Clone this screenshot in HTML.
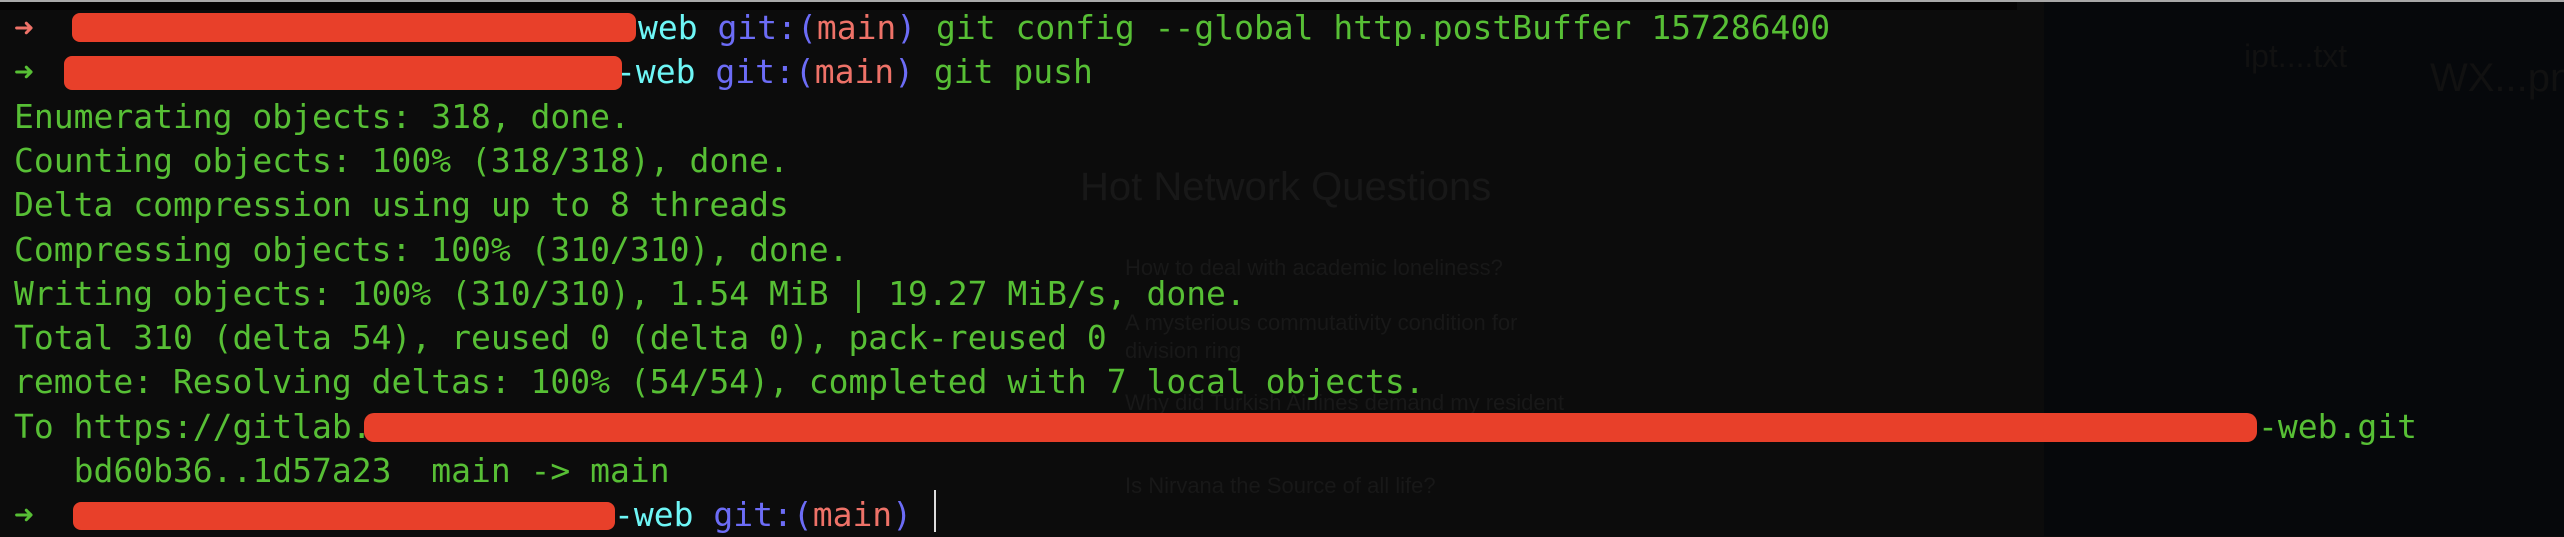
<!DOCTYPE html>
<html><head><meta charset="utf-8"><style>
html,body{margin:0;padding:0}
body{width:2564px;height:536px;overflow:hidden;background:#0c0c0c;position:relative;font-family:"DejaVu Sans Mono","Liberation Mono",monospace;font-size:33px}
.l{position:absolute;white-space:pre;line-height:44px;height:44px;color:#57bf35}
.c{color:#6ef6f6}.b{color:#6c6cf6}.r{color:#ee7268}.g{color:#57bf35}
.box{position:absolute;background:#e8402a;border-radius:8px}
.ghost{position:absolute;font-family:"Liberation Sans",sans-serif;color:#181818;white-space:nowrap}
</style></head><body>
<div style="position:absolute;left:0;top:0;width:2564px;height:2px;background:#a8a8a8"></div>
<div style="position:absolute;left:0;top:2px;width:2017px;height:8px;background:#050404"></div>
<div style="position:absolute;left:2044px;top:2px;width:520px;height:534px;background:#06080b;overflow:hidden">
<div class="ghost" style="left:200px;top:36px;font-size:32px;color:#111">ipt....txt</div>
<div class="ghost" style="left:386px;top:54px;font-size:40px;color:#111">WX...png</div>
</div>
<div class="ghost" style="left:1080px;top:165px;font-size:40px">Hot Network Questions</div>
<div class="ghost" style="left:1125px;top:255px;font-size:22px">How to deal with academic loneliness?</div>
<div class="ghost" style="left:1125px;top:310px;font-size:22px">A mysterious commutativity condition for</div>
<div class="ghost" style="left:1125px;top:338px;font-size:22px">division ring</div>
<div class="ghost" style="left:1125px;top:390px;font-size:22px">Why did Turkish Airlines demand my resident</div>
<div class="ghost" style="left:1125px;top:473px;font-size:22px">Is Nirvana the Source of all life?</div>

<div class="l r" style="left:14px;top:6px">➜</div>
<div class="l" style="left:638px;top:6px"><span class="c">web</span> <span class="b">git:(</span><span class="r">main</span><span class="b">)</span> git config --global http.postBuffer 157286400</div>
<div class="box" style="left:72px;top:13px;width:564px;height:29px"></div>

<div class="l g" style="left:14px;top:50px">➜</div>
<div class="l" style="left:616px;top:50px"><span class="c">-web</span> <span class="b">git:(</span><span class="r">main</span><span class="b">)</span> git push</div>
<div class="box" style="left:64px;top:56px;width:558px;height:34px"></div>

<div class="l" style="left:14px;top:95px">Enumerating objects: 318, done.</div>
<div class="l" style="left:14px;top:139px">Counting objects: 100% (318/318), done.</div>
<div class="l" style="left:14px;top:183px">Delta compression using up to 8 threads</div>
<div class="l" style="left:14px;top:228px">Compressing objects: 100% (310/310), done.</div>
<div class="l" style="left:14px;top:272px">Writing objects: 100% (310/310), 1.54 MiB | 19.27 MiB/s, done.</div>
<div class="l" style="left:14px;top:316px">Total 310 (delta 54), reused 0 (delta 0), pack-reused 0</div>
<div class="l" style="left:14px;top:360px">remote: Resolving deltas: 100% (54/54), completed with 7 local objects.</div>
<div class="l" style="left:14px;top:405px">To https://gitlab.</div>
<div class="box" style="left:364px;top:413px;width:1893px;height:29px;border-radius:10px"></div>
<div class="l" style="left:2258px;top:405px">-web.git</div>
<div class="l" style="left:14px;top:449px">   bd60b36..1d57a23  main -&gt; main</div>

<div class="l g" style="left:14px;top:493px">➜</div>
<div class="l" style="left:614px;top:493px"><span class="c">-web</span> <span class="b">git:(</span><span class="r">main</span><span class="b">)</span></div>
<div class="box" style="left:73px;top:502px;width:542px;height:28px"></div>
<div style="position:absolute;left:934px;top:490px;width:2px;height:42px;background:#ddd"></div>
</body></html>
